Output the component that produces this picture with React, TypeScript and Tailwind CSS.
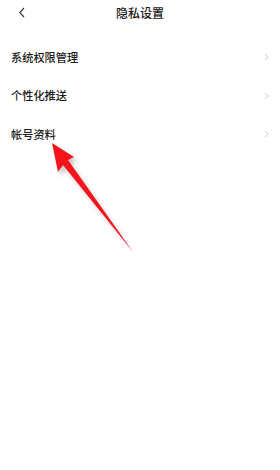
import React from 'react';

const items = ['系统权限管理', '个性化推送', '帐号资料'];

export default function App() {
  return (
    <div
      className="relative w-[280px] h-[470px] bg-white text-[#1a1a1a] overflow-hidden"
      style={{ fontFamily: '"Noto Sans CJK SC", "Noto Sans", sans-serif' }}
    >
      {/* Header */}
      <div className="relative flex h-[26px] items-center justify-center">
        <svg className="absolute left-[18px] top-[7px]" width="8" height="11" viewBox="0 0 8 11" fill="none">
          <path d="M6 1 L1.8 5.5 L6 10" stroke="#333" strokeWidth="1.1" />
        </svg>
        <span className="text-[12px] font-medium leading-none">隐私设置</span>
      </div>

      {/* List */}
      <div className="mt-[12px] flex flex-col">
        {items.map((label) => (
          <div key={label} className="flex h-[38.5px] items-center justify-between pl-[11px] pr-[11px]">
            <span className="text-[11.2px] font-medium leading-none">{label}</span>
            <svg width="5" height="8" viewBox="0 0 5 8" fill="none">
              <path d="M1 1 L4 4 L1 7" stroke="#c4c4c4" strokeWidth="0.9" />
            </svg>
          </div>
        ))}
      </div>

      {/* Red annotation arrow */}
      <svg className="pointer-events-none absolute left-0 top-0" width="280" height="470" viewBox="0 0 280 470">
        <defs>
          <filter id="sh" x="-50%" y="-50%" width="200%" height="200%">
            <feGaussianBlur stdDeviation="2" />
          </filter>
        </defs>
        <path
          d="M55 147 L77 161 L71 164 L136 256 L66 169 L61 176 Z"
          fill="#000"
          opacity="0.22"
          filter="url(#sh)"
        />
        <path d="M52 143 L74 157 L68 160 L133 252 L63 165 L58 172 Z" fill="#f5141c" />
      </svg>
    </div>
  );
}
